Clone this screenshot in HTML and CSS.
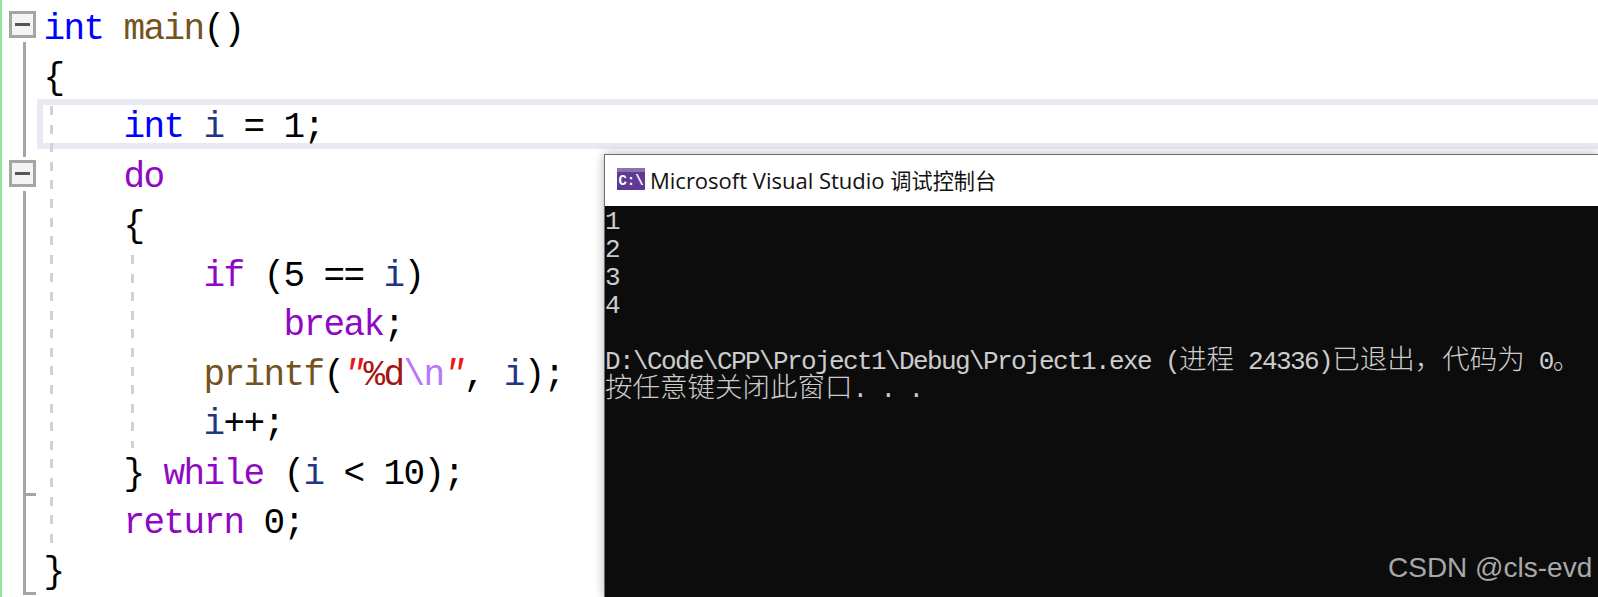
FILE: index.html
```html
<!DOCTYPE html>
<html lang="zh">
<head>
<meta charset="utf-8">
<title>Console</title>
<link rel="stylesheet" href="styles.css">
</head>
<body>
<div class="stage">
  <div class="gutter">
    <div class="fold f1"><i></i></div>
    <div class="fold f2"><i></i></div>
    <div class="rail r1"></div>
    <div class="rail r2"></div>
    <div class="tick t1"></div>
    <div class="tick t2"></div>
    <div class="guide g1"></div>
    <div class="guide g2"></div>
  </div>
  <pre class="code"><span class="ln"><b class="k">int</b> <b class="fn">main</b>()</span><span class="ln">{</span><span class="ln cur">    <b class="k">int</b> <b class="v">i</b> = 1;</span><span class="ln">    <b class="c">do</b></span><span class="ln">    {</span><span class="ln">        <b class="c">if</b> (5 == <b class="v">i</b>)</span><span class="ln">            <b class="c">break</b>;</span><span class="ln">        <b class="fn">printf</b>(<b class="q">"</b><b class="s">%d</b><b class="e">\n</b><b class="q">"</b>, <b class="v">i</b>);</span><span class="ln">        <b class="v">i</b>++;</span><span class="ln">    } <b class="c">while</b> (<b class="v">i</b> &lt; 10);</span><span class="ln">    <b class="c">return</b> 0;</span><span class="ln">}</span></pre>
  <section class="win">
    <header class="bar">
      <svg class="ico" viewBox="0 0 28 22" width="28" height="22">
        <rect width="28" height="22" fill="#5f3a94"/>
        <rect x="0" y="0" width="28" height="4" fill="#8a72ae"/>
        <text x="14" y="17" text-anchor="middle" class="ico-t">C:\</text>
      </svg>
      <span class="ttl">Microsoft Visual Studio <span class="tz">调试控制台</span></span>
    </header>
    <div class="term">
      <div class="tl">1</div>
      <div class="tl">2</div>
      <div class="tl">3</div>
      <div class="tl">4</div>
      <div class="tl">&nbsp;</div>
      <div class="tl">D:\Code\CPP\Project1\Debug\Project1.exe (<span class="z">进程</span> 24336)<span class="z">已退出，代码为</span> 0<span class="z">。</span></div>
      <div class="tl"><span class="z">按任意键关闭此窗口</span>. . .</div>
    </div>
  </section>
  <div class="mark">CSDN @cls-evd</div>
</div>
</body>
</html>
```

FILE: styles.css
```css
* { box-sizing: border-box; }
html, body { margin: 0; padding: 0; background: #fff; }
.stage { position: relative; width: 1598px; height: 597px; overflow: hidden; background: #fff; border-left: 2px solid #8fe89a; }
.code { margin: 0; padding: 0.6px 0 0 41.5px; font-family: "Liberation Mono", monospace; font-size: 36px; letter-spacing: -1.6px; color: #000; }
.code b { font-weight: 400; }
.ln { display: block; height: 49.45px; line-height: 57.5px; white-space: pre; }
.cur { margin: 0 -20px 0 -6.5px; padding-left: 6.5px; box-shadow: inset 0 0 0 6px #e9e9f1; }
.k { color: #0000ff; }
.fn { color: #74531f; }
.v { color: #1f377f; }
.c { color: #8f08c4; }
.s { color: #a31515; }
.q { color: #e81818; font-style: italic; }
.e { color: #b776fb; }
.gutter { position: absolute; inset: 0; }
.fold { position: absolute; left: 7px; width: 27px; height: 27px; border: 3px solid #a5a5a5; background: #f4f4f4; display: flex; align-items: center; justify-content: center; }
.fold i { display: block; width: 15px; height: 3px; background: #555; }
.f1 { top: 11px; }
.f2 { top: 160px; }
.rail { position: absolute; left: 21px; width: 3px; background: #a5a5a5; }
.r1 { top: 42px; height: 115px; }
.r2 { top: 191px; height: 404px; }
.tick { position: absolute; left: 21px; width: 13px; height: 3px; background: #a5a5a5; }
.t1 { top: 493px; }
.t2 { top: 592px; }
.guide { position: absolute; width: 3px; background: repeating-linear-gradient(#d2d2d2 0 9px, transparent 9px 18.6px); }
.g1 { left: 48px; top: 106px; height: 437px; }
.g2 { left: 129px; top: 255px; height: 193px; }
.win { position: absolute; left: 602px; top: 154px; right: 0; bottom: 0; border: 1px solid #6d6d6d; border-width: 1px 0 0 1px; box-shadow: 0 0 10px rgba(0,0,0,.3); background: #fff; display: flex; flex-direction: column; }
.bar { height: 51px; flex: none; display: flex; align-items: center; gap: 5px; padding: 0 0 3px 12px; background: #fff; }
.ico { flex: none; }
.ico-t { font-family: "Liberation Mono", monospace; font-size: 14px; font-weight: 700; fill: #fff; }
.ttl { font-family: "Open Sans", "Noto Sans CJK SC", sans-serif; font-size: 22px; color: #111; white-space: nowrap; }
.tz { font-size: 21.2px; }
.term { flex: 1; background: #0c0c0c; color: #ccc; font-family: "Liberation Mono", monospace; font-size: 26px; letter-spacing: -1.6px; padding-top: 2px; }
.tl { height: 28px; line-height: 28px; white-space: pre; }
.z { font-family: "Noto Sans CJK SC", sans-serif; font-size: 27.5px; font-weight: 300; letter-spacing: 0; line-height: 0; }
.mark { position: absolute; left: 1386px; top: 552px; font-family: "Liberation Sans", sans-serif; font-size: 28px; color: #a8a8a8; white-space: nowrap; }
```
